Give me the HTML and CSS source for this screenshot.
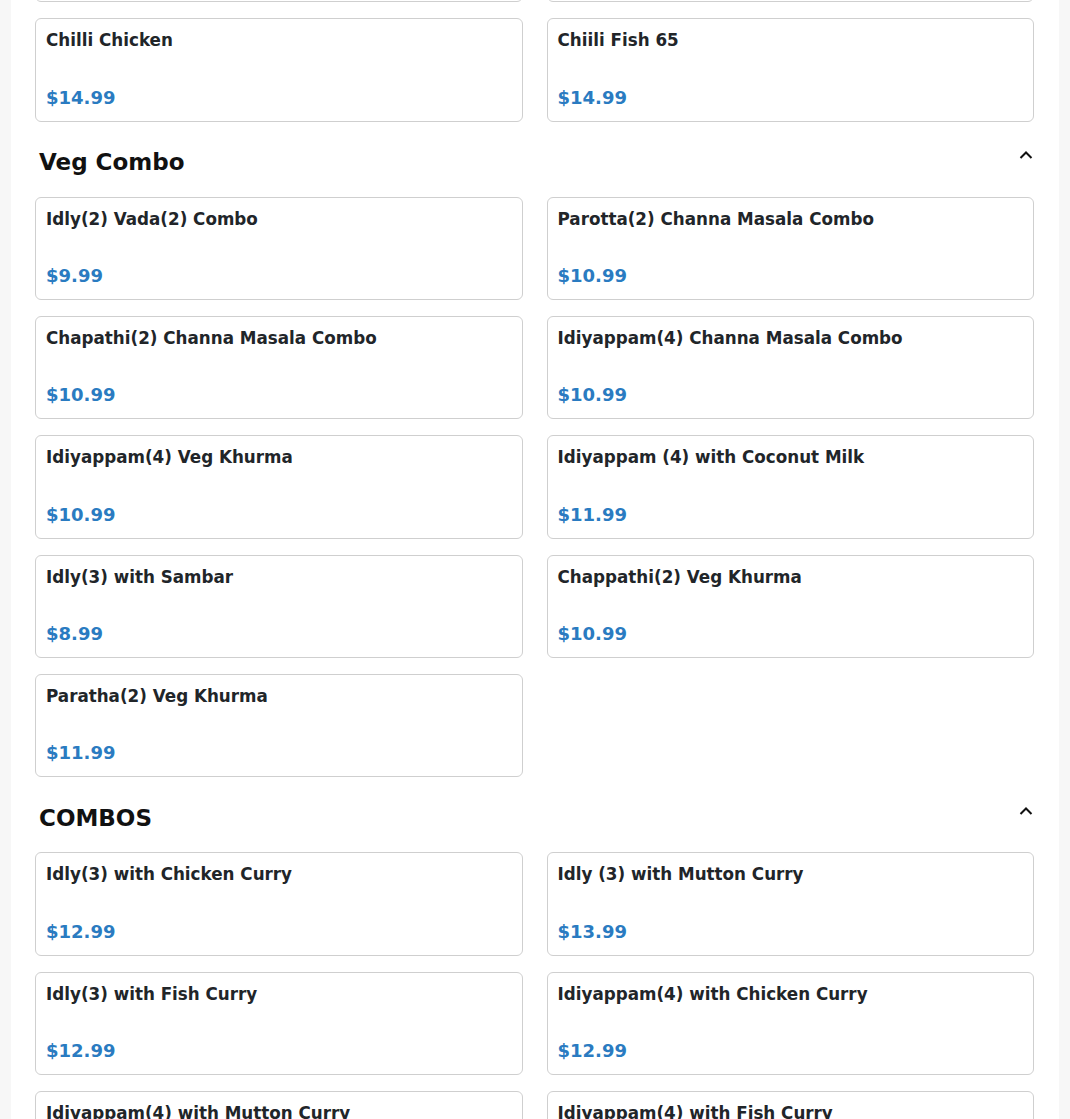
FILE: index.html
```html
<!DOCTYPE html>
<html lang="en">
<head>
<meta charset="utf-8">
<title>Menu</title>
<link rel="stylesheet" href="styles.css">
</head>
<body>
<main class="panel">
  <section class="section section-first">
    <div class="grid">
      <div class="card"><div class="name">Chicken 65</div><div class="price">$14.99</div></div>
      <div class="card"><div class="name">Fish Fry</div><div class="price">$14.99</div></div>
      <div class="card"><div class="name">Chilli Chicken</div><div class="price">$14.99</div></div>
      <div class="card"><div class="name">Chiili Fish 65</div><div class="price">$14.99</div></div>
    </div>
  </section>

  <section class="section">
    <div class="section-head">
      <h2 class="section-title">Veg Combo</h2>
      <svg class="chevron" width="16" height="10" viewBox="0 0 16 10" aria-hidden="true"><path d="M2.5 8 L8 2.5 L13.5 8" fill="none" stroke="#111" stroke-width="2"/></svg>
    </div>
    <div class="grid">
      <div class="card"><div class="name">Idly(2) Vada(2) Combo</div><div class="price">$9.99</div></div>
      <div class="card"><div class="name">Parotta(2) Channa Masala Combo</div><div class="price">$10.99</div></div>
      <div class="card"><div class="name">Chapathi(2) Channa Masala Combo</div><div class="price">$10.99</div></div>
      <div class="card"><div class="name">Idiyappam(4) Channa Masala Combo</div><div class="price">$10.99</div></div>
      <div class="card"><div class="name">Idiyappam(4) Veg Khurma</div><div class="price">$10.99</div></div>
      <div class="card"><div class="name">Idiyappam (4) with Coconut Milk</div><div class="price">$11.99</div></div>
      <div class="card"><div class="name">Idly(3) with Sambar</div><div class="price">$8.99</div></div>
      <div class="card"><div class="name">Chappathi(2) Veg Khurma</div><div class="price">$10.99</div></div>
      <div class="card"><div class="name">Paratha(2) Veg Khurma</div><div class="price">$11.99</div></div>
    </div>
  </section>

  <section class="section">
    <div class="section-head">
      <h2 class="section-title">COMBOS</h2>
      <svg class="chevron" width="16" height="10" viewBox="0 0 16 10" aria-hidden="true"><path d="M2.5 8 L8 2.5 L13.5 8" fill="none" stroke="#111" stroke-width="2"/></svg>
    </div>
    <div class="grid">
      <div class="card"><div class="name">Idly(3) with Chicken Curry</div><div class="price">$12.99</div></div>
      <div class="card"><div class="name">Idly (3) with Mutton Curry</div><div class="price">$13.99</div></div>
      <div class="card"><div class="name">Idly(3) with Fish Curry</div><div class="price">$12.99</div></div>
      <div class="card"><div class="name">Idiyappam(4) with Chicken Curry</div><div class="price">$12.99</div></div>
      <div class="card"><div class="name">Idiyappam(4) with Mutton Curry</div><div class="price">$13.99</div></div>
      <div class="card"><div class="name">Idiyappam(4) with Fish Curry</div><div class="price">$12.99</div></div>
    </div>
  </section>
</main>
</body>
</html>
```

FILE: styles.css
```css
html, body {
  margin: 0;
  padding: 0;
}

body {
  background: #f7f7f7;
  font-family: "DejaVu Sans", "Liberation Sans", sans-serif;
  color: #212529;
}

.panel {
  background: #ffffff;
  margin: -101px 11px 0 11px;
  padding: 0 25px 40px 24px;
  min-height: 1300px;
}

.section-head {
  display: flex;
  justify-content: space-between;
  align-items: flex-start;
  margin: 24.5px 0 18.75px 0;
  padding: 0 0 0 4px;
}

.section-title {
  margin: 0;
  font-size: 23px;
  line-height: 32px;
  font-weight: bold;
  color: #111;
}

.chevron {
  display: block;
  margin-top: 4px;
}

.grid {
  display: grid;
  grid-template-columns: 1fr 1fr;
  column-gap: 24px;
  row-gap: 16px;
}

.card {
  box-sizing: border-box;
  height: 103.25px;
  border: 1px solid #cfcfcf;
  border-radius: 6px;
  padding: 9px 10px 11px 10px;
  display: flex;
  flex-direction: column;
  justify-content: space-between;
  background: #fff;
}

.name {
  font-size: 16.75px;
  line-height: 24px;
  font-weight: bold;
  color: #212529;
}

.price {
  font-size: 18px;
  line-height: 24px;
  font-weight: bold;
  color: #2a7bc1;
}
```
